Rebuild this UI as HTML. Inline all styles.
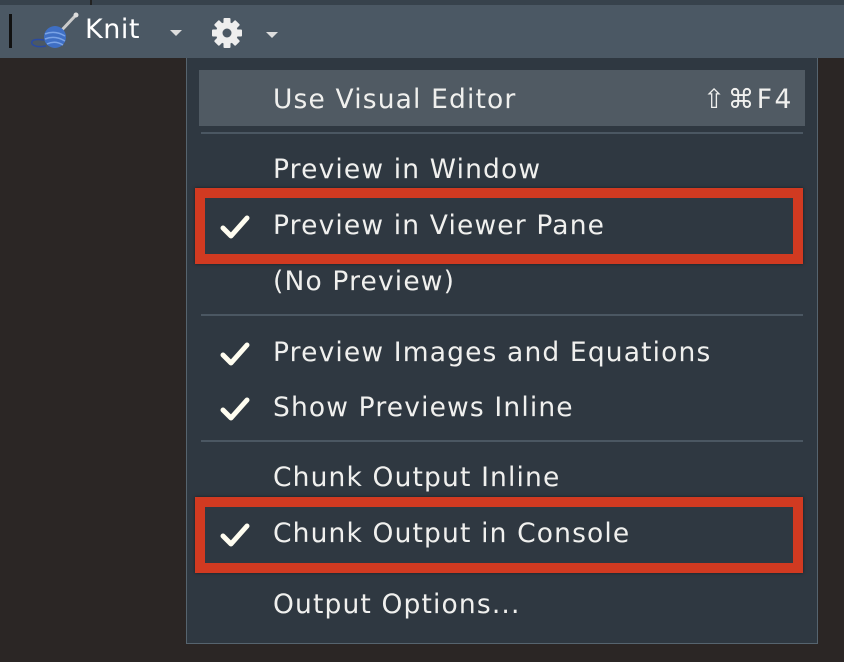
<!DOCTYPE html>
<html><head><style>
*{margin:0;padding:0;box-sizing:border-box}
body{width:844px;height:662px;background:#2b2625;position:relative;overflow:hidden;font-family:"DejaVu Sans","Liberation Sans",sans-serif;color:#f0f0ee}
.top{position:absolute;left:0;top:0;width:844px;height:6px;background:#37424c}
.bar{position:absolute;left:0;top:5px;width:844px;height:53px;background:#4b5864}
.menu{position:absolute;left:186px;top:58px;width:632px;height:586px;background:#2f3841;border:1px solid #56646f;border-top:none}
.row{position:absolute;left:86px;font-size:26.5px;letter-spacing:1.15px;white-space:nowrap;line-height:30px}
.sep{position:absolute;left:14px;width:602px;height:2px;background:#4b5762}
.hl{position:absolute;left:12px;top:12px;width:606px;height:56px;background:#505a63}
.red{position:absolute;left:8px;width:608px;height:76px;border:10px solid #d13a21;box-shadow:0 0 3px rgba(0,0,0,.5)}
.chk{position:absolute;left:33px;width:30px;height:24px}
.caret{position:absolute;width:0;height:0;border-left:6px solid transparent;border-right:6px solid transparent;border-top:6px solid #ddd}
</style></head><body>
<div class="top"></div>
<div style="position:absolute;left:90px;top:0;width:2px;height:6px;background:#222"></div>
<div class="bar"></div>
<div style="position:absolute;left:9px;top:14px;width:3px;height:34px;background:#111"></div>
<svg style="position:absolute;left:26px;top:12px" width="54" height="38" viewBox="0 0 54 38">
<line x1="34" y1="20" x2="50" y2="3" stroke="#ccc" stroke-width="3"/>
<circle cx="50" cy="3" r="2.5" fill="#ddd"/>
<circle cx="29" cy="25" r="11" fill="#3f6fc4"/>
<path d="M19 22 Q29 18 39 24 M19 27 Q29 23 39 29 M21 32 Q29 28 37 33" stroke="#7aa3e6" stroke-width="1.5" fill="none"/>
<path d="M18 28 Q4 26 6 32 Q10 36 20 34" stroke="#2a4aa0" stroke-width="1.5" fill="none"/>
</svg>
<div style="position:absolute;left:85px;top:14px;font-size:27px;letter-spacing:0.5px;color:#fff">Knit</div>
<div class="caret" style="left:170px;top:30px"></div>
<svg style="position:absolute;left:211px;top:17px" width="32" height="32" viewBox="-16 -16 32 32">
<g fill="#eee">
<circle r="11"/>
<g id="t"><rect x="-3.5" y="-15" width="7" height="8" rx="1"/></g>
<use href="#t" transform="rotate(45)"/><use href="#t" transform="rotate(90)"/><use href="#t" transform="rotate(135)"/>
<use href="#t" transform="rotate(180)"/><use href="#t" transform="rotate(225)"/><use href="#t" transform="rotate(270)"/><use href="#t" transform="rotate(315)"/>
</g>
<circle r="4.5" fill="#4b5864"/>
</svg>
<div class="caret" style="left:266px;top:32px"></div>
<div class="menu">
<div class="hl"></div>
<div class="row" style="top:27px">Use Visual Editor</div>
<div class="row" style="top:27px;left:516px;letter-spacing:2.5px">⇧⌘F4</div>
<div class="sep" style="top:74px"></div>
<div class="row" style="top:97px">Preview in Window</div>
<div class="red" style="top:130px"></div>
<svg class="chk" style="top:157px" viewBox="0 0 30 24"><path d="M3 13 L11 21 L27 3" stroke="#fffdf0" stroke-width="5" fill="none" stroke-linecap="round" stroke-linejoin="round"/></svg>
<div class="row" style="top:153px">Preview in Viewer Pane</div>
<div class="row" style="top:209px">(No Preview)</div>
<div class="sep" style="top:256px"></div>
<svg class="chk" style="top:284px" viewBox="0 0 30 24"><path d="M3 13 L11 21 L27 3" stroke="#fffdf0" stroke-width="5" fill="none" stroke-linecap="round" stroke-linejoin="round"/></svg>
<div class="row" style="top:280px">Preview Images and Equations</div>
<svg class="chk" style="top:339px" viewBox="0 0 30 24"><path d="M3 13 L11 21 L27 3" stroke="#fffdf0" stroke-width="5" fill="none" stroke-linecap="round" stroke-linejoin="round"/></svg>
<div class="row" style="top:335px">Show Previews Inline</div>
<div class="sep" style="top:382px"></div>
<div class="row" style="top:405px">Chunk Output Inline</div>
<div class="red" style="top:439px"></div>
<svg class="chk" style="top:465px" viewBox="0 0 30 24"><path d="M3 13 L11 21 L27 3" stroke="#fffdf0" stroke-width="5" fill="none" stroke-linecap="round" stroke-linejoin="round"/></svg>
<div class="row" style="top:461px">Chunk Output in Console</div>
<div class="row" style="top:532px">Output Options...</div>
</div>
</body></html>
